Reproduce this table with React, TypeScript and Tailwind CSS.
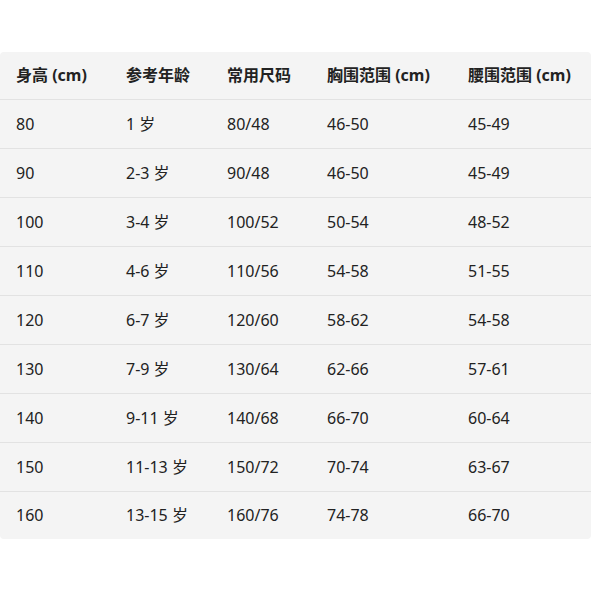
const rows = [
  ["80", "1 岁", "80/48", "46-50", "45-49"],
  ["90", "2-3 岁", "90/48", "46-50", "45-49"],
  ["100", "3-4 岁", "100/52", "50-54", "48-52"],
  ["110", "4-6 岁", "110/56", "54-58", "51-55"],
  ["120", "6-7 岁", "120/60", "58-62", "54-58"],
  ["130", "7-9 岁", "130/64", "62-66", "57-61"],
  ["140", "9-11 岁", "140/68", "66-70", "60-64"],
  ["150", "11-13 岁", "150/72", "70-74", "63-67"],
  ["160", "13-15 岁", "160/76", "74-78", "66-70"],
];

const headers = ["身高 (cm)", "参考年龄", "常用尺码", "胸围范围 (cm)", "腰围范围 (cm)"];
const widths = ["w-[110px]", "w-[101px]", "w-[100px]", "w-[141px]", "w-[139px]"];

export default function App() {
  return (
    <div
      className="h-[591px] w-[591px] bg-white pt-[52px] text-[16px] text-[#222]"
      style={{ fontFamily: '"Noto Sans", "Noto Sans CJK SC", sans-serif' }}
    >
      <div className="overflow-hidden rounded-[4px] bg-[#f4f4f4]">
        <table className="w-full table-fixed border-collapse">
          <thead>
            <tr className="h-[47px] border-b border-[#e2e2e2]">
              {headers.map((h, i) => (
                <th key={h} className={`${widths[i]} px-4 text-left font-bold`}>
                  {h}
                </th>
              ))}
            </tr>
          </thead>
          <tbody>
            {rows.map((r, ri) => (
              <tr
                key={r[0]}
                className={ri < rows.length - 1 ? "h-[49px] border-b border-[#e2e2e2]" : "h-[48px]"}
              >
                {r.map((c, ci) => (
                  <td key={ci} className="px-4 text-left">
                    {c}
                  </td>
                ))}
              </tr>
            ))}
          </tbody>
        </table>
      </div>
    </div>
  );
}
